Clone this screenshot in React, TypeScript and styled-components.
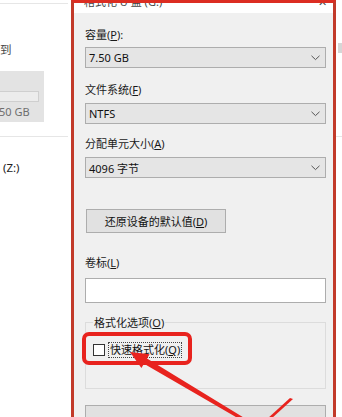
import React from "react";
import styled, { createGlobalStyle } from "styled-components";

const Global = createGlobalStyle`
  html, body { margin: 0; padding: 0; background: #ffffff; }
  body { width: 342px; height: 417px; overflow: hidden; }
  * { box-sizing: border-box; }
`;

const FONT = `"Noto Sans", "Noto Sans CJK SC", sans-serif`;

const Page = styled.div`
  position: relative;
  display: flex;
  width: 342px;
  height: 417px;
  overflow: hidden;
  font-family: ${FONT};
  font-size: 11px;
  color: #1a1a1a;
  background: #ffffff;
`;

/* background window, left part */
const BackPanel = styled.div`
  width: 71px;
  flex: none;
  display: flex;
  flex-direction: column;
  background: #ffffff;
`;

const Sep = styled.div<{ $mt: number }>`
  margin-top: ${(p) => p.$mt}px;
  height: 1px;
  width: 68px;
  background: #e6e6e6;
`;

const BackText = styled.div<{ $mt: number; $pl?: number; $color?: string }>`
  margin-top: ${(p) => p.$mt}px;
  padding-left: ${(p) => p.$pl ?? 0}px;
  line-height: 14px;
  font-size: 11.5px;
  color: ${(p) => p.$color ?? "#333"};
  white-space: nowrap;
`;

const DriveTile = styled.div`
  margin-top: 14px;
  width: 44px;
  height: 51px;
  background: #e3e3e3;
  display: flex;
  flex-direction: column;
  padding-top: 20px;
`;

const UsageBar = styled.div`
  width: 39px;
  height: 11px;
  background: #ececec;
  border: 1px solid #cfcfcf;
  border-left: none;
`;

const TileText = styled.div`
  margin-top: 3px;
  font-size: 11px;
  line-height: 14px;
  color: #6e6e6e;
  white-space: nowrap;
  margin-left: -1px;
`;

/* dialog */
const Dialog = styled.div`
  width: 265px;
  flex: none;
  display: flex;
  flex-direction: column;
  border: 3px solid #c23a2a;
  border-top-color: #dc2d22;
  border-bottom: none;
  background: #f0f0f0;
`;

const TitleBar = styled.div`
  height: 10px;
  flex: none;
  background: #ffffff;
  overflow: hidden;
  display: flex;
  justify-content: space-between;
  padding: 0 6px 0 10px;
`;

const TitleText = styled.div`
  margin-top: -8px;
  font-size: 11px;
  line-height: 14px;
  color: #444;
  white-space: nowrap;
`;

const Body = styled.div`
  flex: 1;
  display: flex;
  flex-direction: column;
  padding: 14px 7px 0 11px;
`;

const Field = styled.div<{ $mt?: number; $gap?: number }>`
  margin-top: ${(p) => p.$mt ?? 0}px;
  display: flex;
  flex-direction: column;
  gap: ${(p) => p.$gap ?? 5}px;
`;

const Label = styled.div`
  height: 15px;
  line-height: 15px;
  font-size: 11px;
  color: #1a1a1a;
  white-space: nowrap;
`;

const U = styled.span`
  text-decoration: underline;
  text-underline-offset: 1px;
`;

const Combo = styled.div`
  height: 21px;
  display: flex;
  align-items: center;
  justify-content: space-between;
  padding: 0 5px 0 3px;
  background: #e5e5e5;
  border: 1px solid #adadad;
  font-size: 11px;
  color: #111;
`;

const Chevron = () => (
  <svg width="9" height="6" viewBox="0 0 9 6">
    <polyline points="0.5,0.8 4.5,4.6 8.5,0.8" fill="none" stroke="#555" strokeWidth="1" />
  </svg>
);

const Button = styled.div<{ $w?: string; $h: number; $mt: number; $ml?: number }>`
  margin-top: ${(p) => p.$mt}px;
  margin-left: ${(p) => p.$ml ?? 0}px;
  width: ${(p) => p.$w ?? "100%"};
  height: ${(p) => p.$h}px;
  flex: none;
  display: flex;
  align-items: center;
  justify-content: center;
  background: #e1e1e1;
  border: 1px solid #adadad;
  font-size: 11px;
  color: #111;
  white-space: nowrap;
`;

const TextBox = styled.div`
  height: 25px;
  background: #ffffff;
  border: 1px solid #adadad;
`;

const Group = styled.fieldset`
  margin: 12px 0 0 0;
  padding: 12px 0 0 7px;
  height: 74px;
  flex: none;
  border: 1px solid #dcdcdc;
  border-radius: 0;
  min-width: 0;
`;

const Legend = styled.legend`
  padding: 0 1px;
  margin-left: 0px;
  font-size: 11px;
  line-height: 15px;
  color: #1a1a1a;
  white-space: nowrap;
`;

const CheckRow = styled.div`
  display: flex;
  align-items: center;
  gap: 3px;
`;

const CheckBox = styled.div`
  width: 12px;
  height: 12px;
  background: #ffffff;
  border: 1px solid #333;
`;

const FocusLabel = styled.div`
  border: 1px dotted #444;
  padding: 0 1px;
  line-height: 14px;
  font-size: 11px;
  color: #111;
  white-space: nowrap;
`;

const RightStrip = styled.div`
  flex: 1;
  display: flex;
  flex-direction: column;
  background: #ffffff;
`;

const Nub = styled.div`
  margin-top: 43px;
  margin-left: 2px;
  width: 4px;
  height: 10px;
  background: #d6d6d6;
`;

const Overlay = styled.svg`
  position: absolute;
  left: 0;
  top: 0;
  pointer-events: none;
`;

export default function App() {
  return (
    <>
      <Global />
      <Page>
        <BackPanel>
          <Sep $mt={3} />
          <BackText $mt={39} $color="#444">到</BackText>
          <DriveTile>
            <UsageBar />
            <TileText>50 GB</TileText>
          </DriveTile>
          <Sep $mt={14} />
          <BackText $mt={24} $pl={3} $color="#222">(Z:)</BackText>
        </BackPanel>

        <Dialog>
          <TitleBar>
            <TitleText>格式化 U 盘 (G:)</TitleText>
            <TitleText>✕</TitleText>
          </TitleBar>
          <Body>
            <Field>
              <Label>
                容量(<U>P</U>):
              </Label>
              <Combo>
                <span>7.50 GB</span>
                <Chevron />
              </Combo>
            </Field>
            <Field $mt={14} $gap={6}>
              <Label>
                文件系统(<U>F</U>)
              </Label>
              <Combo>
                <span>NTFS</span>
                <Chevron />
              </Combo>
            </Field>
            <Field $mt={12} $gap={6}>
              <Label>
                分配单元大小(<U>A</U>)
              </Label>
              <Combo>
                <span>4096 字节</span>
                <Chevron />
              </Combo>
            </Field>
            <Button $w="140px" $h={24} $mt={31} $ml={1}>
              还原设备的默认值(<U>D</U>)
            </Button>
            <Field $mt={22} $gap={8}>
              <Label>
                卷标(<U>L</U>)
              </Label>
              <TextBox />
            </Field>
            <Group>
              <Legend>
                格式化选项(<U>O</U>)
              </Legend>
              <CheckRow>
                <CheckBox />
                <FocusLabel>
                  快速格式化(<U>Q</U>)
                </FocusLabel>
              </CheckRow>
            </Group>
            <Button $h={24} $mt={16} />
          </Body>
        </Dialog>

        <RightStrip>
          <Nub />
          <Sep $mt={83} />
        </RightStrip>

        <Overlay width="342" height="417" viewBox="0 0 342 417">
          <rect x="84" y="334" width="106" height="29" rx="5" ry="5" fill="none" stroke="#e8231e" strokeWidth="4" />
          <polygon
            points="130,352 149.6,354.3 147,358.6 246,419 244,421.7 144,363.8 141.4,368.1"
            fill="#e8231e"
          />
          <polygon points="293,399 290,398 267,419 271,419" fill="#e8231e" />
        </Overlay>
      </Page>
    </>
  );
}
